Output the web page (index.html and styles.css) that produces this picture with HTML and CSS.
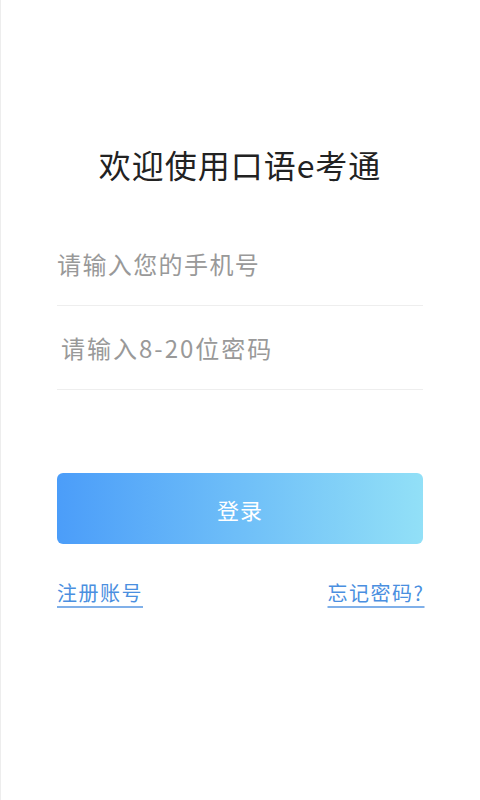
FILE: index.html
```html
<!DOCTYPE html>
<html lang="zh-CN">
<head>
  <meta charset="UTF-8" />
  <meta name="viewport" content="width=device-width, initial-scale=1.0"/>
  <title>登录</title>
  <link rel="stylesheet" href="styles.css">
</head>
<body>

  <div class="page">
    <!-- Title -->
    <h1 class="title">欢迎使用口语e考通</h1>

    <!-- Login Form -->
    <div class="form">
      <div class="field">
        <input type="tel" id="phone" placeholder="请输入您的手机号" />
      </div>
      <div class="field field-pass">
        <input type="password" id="password" placeholder="请输入8-20位密码" />
      </div>
    </div>

    <button class="btn">登录</button>

    <div class="links">
      <a href="#" class="link">注册账号</a>
      <a href="#" class="link">忘记密码?</a>
    </div>
  </div>

</body>
</html>
```

FILE: styles.css
```css
:root {
  --text-main: #222222;
  --placeholder: #999999;
  --line: #eeeeee;
  --link: #4a8fe0;
  --btn-start: #4b9df9;
  --btn-end: #92e0f7;
}

* {
  box-sizing: border-box;
}

body {
  margin: 0;
  background: #ffffff;
  font-family: "Noto Sans CJK SC", "Noto Sans", sans-serif;
  color: var(--text-main);
}

.page {
  min-height: 100vh;
  border-left: 1px solid #ededed;
  padding: 144px 57px 0 56px;
  display: flex;
  flex-direction: column;
}

.title {
  margin: 0;
  font-size: 32px;
  line-height: 40px;
  font-weight: 400;
  letter-spacing: 1px;
  text-align: center;
}

.form {
  margin-top: 38px;
  display: flex;
  flex-direction: column;
}

.field {
  height: 84px;
  border-bottom: 1px solid var(--line);
  display: flex;
  align-items: center;
}

.field input {
  width: 100%;
  border: none;
  outline: none;
  padding: 0;
  background: transparent;
  font-family: inherit;
  font-size: 24px;
  letter-spacing: 1.4px;
  color: var(--text-main);
}

.field input::placeholder {
  color: var(--placeholder);
}

.field-pass input {
  padding-left: 4px;
  letter-spacing: 2px;
}

.btn {
  margin-top: 83px;
  height: 71px;
  border: none;
  border-radius: 6px;
  background: linear-gradient(to right, var(--btn-start), var(--btn-end));
  color: #ffffff;
  font-family: inherit;
  font-size: 22px;
  letter-spacing: 1px;
  cursor: pointer;
}

.links {
  margin-top: 37px;
  display: flex;
  justify-content: space-between;
  line-height: 24px;
}

.link {
  font-size: 20px;
  letter-spacing: 1.5px;
  color: var(--link);
  text-decoration: underline;
  text-decoration-color: rgba(74, 143, 224, 0.7);
  text-underline-offset: 5px;
}

.link:last-child {
  letter-spacing: 1.5px;
  margin-right: -1.5px;
}
```
